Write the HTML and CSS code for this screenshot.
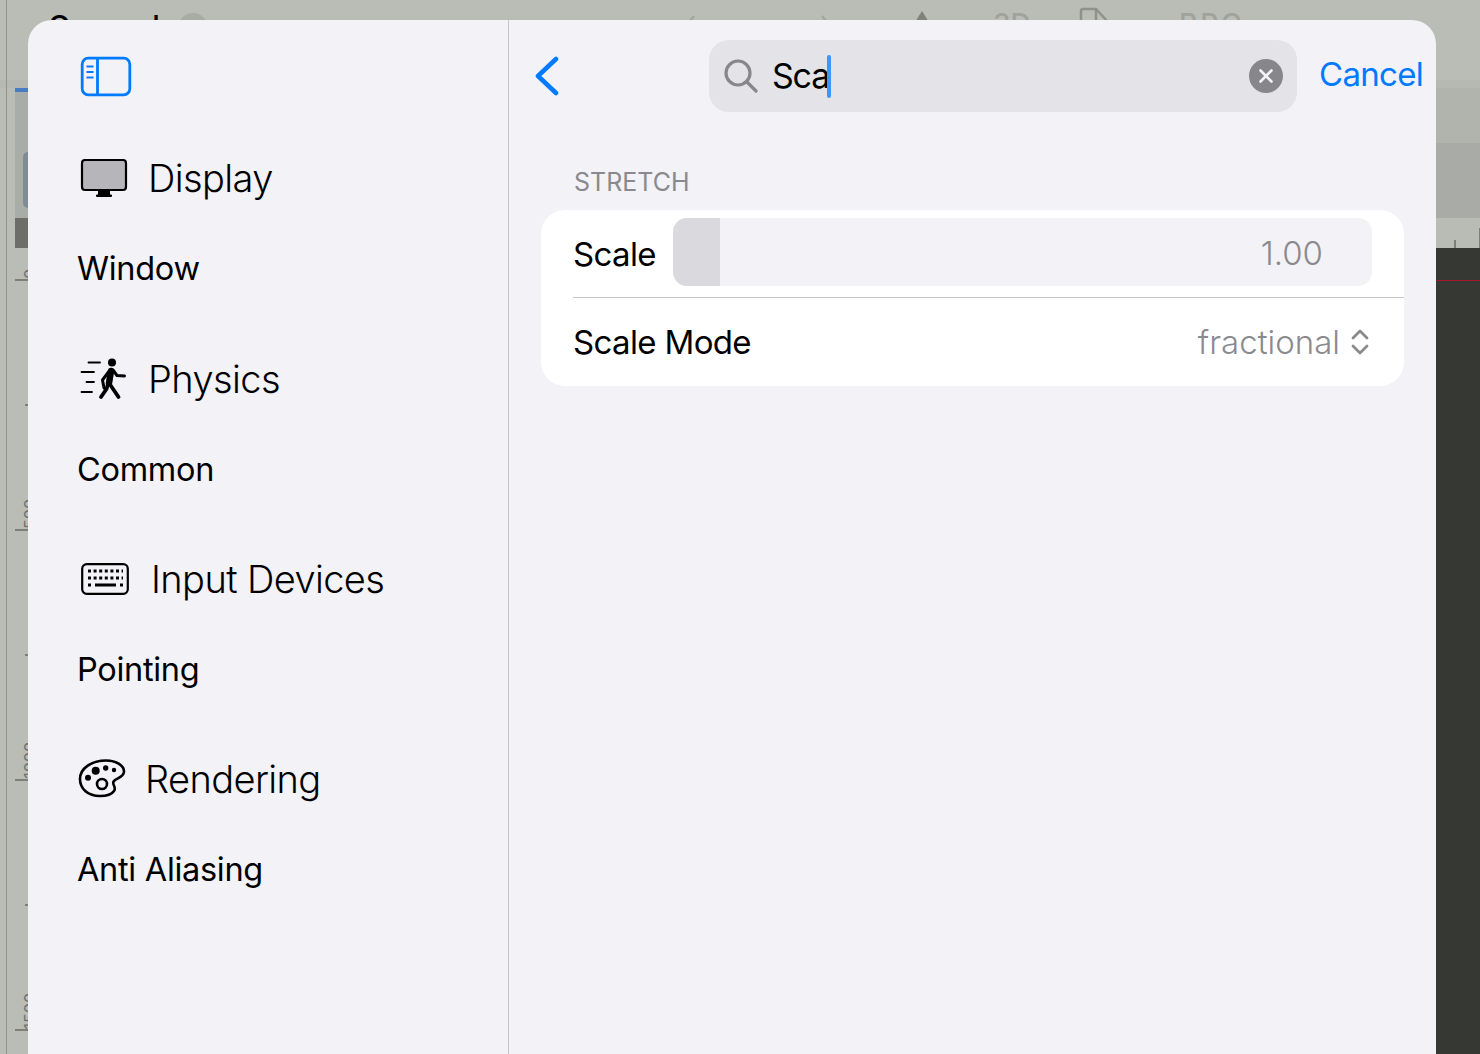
FILE: index.html
```html
<!DOCTYPE html>
<html lang="en">
<head>
    <meta charset="UTF-8">
    <meta name="viewport" content="width=device-width, initial-scale=1.0">
    <title>Settings Search</title>
    <link rel="stylesheet" href="styles.css">
</head>
<body>

<!-- Dimmed editor behind the sheet -->
<div class="editor">
    <div class="topbar">
        <span class="scene-title">General</span>
        <span class="scene-badge"></span>
        <svg class="nav-back" width="20" height="20" viewBox="0 0 20 20"><path d="M12 3 L3 14" /></svg>
        <svg class="nav-forward" width="20" height="20" viewBox="0 0 20 20"><path d="M5 3 L14 14" /></svg>
        <span class="tool-arrow"></span>
        <span class="tool-label tool-3d">3D</span>
        <svg class="tool-doc" width="34" height="24" viewBox="0 0 34 24"><path d="M3 20 V9 Q3 7 5 7 H18 L30 20 M18 7 V20" /></svg>
        <span class="tool-label tool-rpc">RPC</span>
    </div>
    <div class="workspace">
        <div class="left-strip">
            <div class="ruler-panel">
                <div class="panel-accent"></div>
                <div class="panel-body"><div class="panel-thumb"></div></div>
                <div class="panel-dark"></div>
                <div class="ruler">
                    <div class="tick major tick-first"><span>0</span></div>
                    <div class="tick minor"></div>
                    <div class="tick major"><span>500</span></div>
                    <div class="tick minor"></div>
                    <div class="tick major"><span>1000</span></div>
                    <div class="tick minor"></div>
                    <div class="tick major"><span>1500</span></div>
                </div>
            </div>
        </div>
        <div class="right-strip">
            <div class="band band-a"></div>
            <div class="band band-b"></div>
            <div class="band band-c"><i class="mark mark-short"></i><i class="mark mark-tall"></i></div>
            <div class="viewport"><div class="guide"></div></div>
        </div>
    </div>
</div>

<div class="sheet">
    <aside class="sidebar">
        <svg class="sidebar-toggle" width="52" height="41" viewBox="0 0 52 41">
            <rect x="2.200" y="2.200" width="47.600" height="36.600" rx="6" />
            <path d="M17.500 2 V39" />
            <path class="thin" d="M6.500 10.500 H13.500 M6.500 16 H13.500 M6.500 21.500 H13.500" />
        </svg>

        <section class="group">
            <div class="group-head">
                <svg class="icon icon-display" width="48" height="40" viewBox="0 0 48 40">
                    <rect x="2" y="2" width="44" height="30" rx="3" fill="#b5b5ba" stroke="#000" stroke-width="2.200" />
                    <rect x="18" y="32" width="12" height="5" />
                    <rect x="16" y="36.500" width="16" height="2.500" rx="1" />
                </svg>
                <span>Display</span>
            </div>
            <div class="group-item">Window</div>
        </section>

        <section class="group">
            <div class="group-head">
                <svg class="icon icon-physics" width="48" height="44" viewBox="0 0 48 44">
                    <circle cx="32" cy="5.500" r="4" />
                    <path class="limb" d="M31 14 L29 26" />
                    <path class="limb-mid" d="M29 26 L38.500 40" />
                    <path class="limb-mid" d="M28 27 L26.500 32 L21 40" />
                    <path class="limb-thin" d="M30 13 L22.500 23 L24 31" />
                    <path class="limb-thin" d="M33 13 L37 18.500 L44.500 19" />
                    <path class="speed" d="M8.500 5.500 H20 M1.500 15 H14 M6.500 25 H14 M1.500 35 H12" />
                </svg>
                <span>Physics</span>
            </div>
            <div class="group-item">Common</div>
        </section>

        <section class="group">
            <div class="group-head">
                <svg class="icon icon-keyboard" width="48" height="32" viewBox="0 0 48 32">
                    <rect x="1.200" y="1.200" width="45.600" height="29.600" rx="4.500" fill="none" stroke="#000" stroke-width="2.200" />
                    <path class="keys" d="M7 8 H42 M7 15 H42 M7 22 H10 M39 22 H42" />
                    <path class="space" d="M14 22 H35" />
                </svg>
                <span>Input Devices</span>
            </div>
            <div class="group-item">Pointing</div>
        </section>

        <section class="group">
            <div class="group-head">
                <svg class="icon icon-palette" width="48" height="40" viewBox="0 0 48 40">
                    <path class="palette-edge" d="M2 20 C2 9 14 1.500 28 1.500 C39 1.500 46 7 46 12.500 C46 18 39 19 36 22 C33 25 39 28 36 32 C33 36.500 28 37 22 37 C10 37 2 30 2 20 Z" />
                    <circle cx="17.700" cy="11.700" r="4" />
                    <circle cx="27.700" cy="9" r="2.700" />
                    <circle cx="36" cy="11" r="2.200" />
                    <circle cx="10" cy="18.700" r="3" />
                    <circle class="palette-well" cx="24" cy="25" r="5" />
                </svg>
                <span>Rendering</span>
            </div>
            <div class="group-item">Anti Aliasing</div>
        </section>
    </aside>

    <main class="detail">
        <header class="detail-bar">
            <svg class="back" width="26" height="40" viewBox="0 0 26 40"><path d="M22 3 L4 20 L22 37" /></svg>
            <div class="search">
                <svg class="search-icon" width="34" height="34" viewBox="0 0 34 34">
                    <circle cx="14" cy="14" r="12" />
                    <path d="M23 23 L32 32" />
                </svg>
                <span class="search-text">Sca</span><span class="caret"></span>
                <span class="search-clear">
                    <svg width="16" height="16" viewBox="0 0 16 16"><path d="M2.500 2.500 L13.500 13.500 M13.500 2.500 L2.500 13.500" /></svg>
                </span>
            </div>
            <span class="cancel">Cancel</span>
        </header>

        <h2 class="section-title">STRETCH</h2>
        <div class="card">
            <div class="row row-scale">
                <span class="row-label">Scale</span>
                <div class="slider">
                    <div class="slider-fill"></div>
                    <span class="slider-value">1.00</span>
                </div>
            </div>
            <div class="row row-mode">
                <span class="row-label">Scale Mode</span>
                <span class="row-value">fractional</span>
                <svg class="updown" width="20" height="28" viewBox="0 0 20 28"><path d="M3 10 L10 3 L17 10 M3 18 L10 25 L17 18" /></svg>
            </div>
        </div>
    </main>
</div>

</body>
</html>
```
FILE: styles.css
```css
html, body {
    margin: 0;
    height: 100%;
    overflow: hidden;
}
body {
    font-family: Inter, "Liberation Sans", sans-serif;
    color: #000;
    background-color: #babcb6;
}

/* editor behind the sheet */
.editor {
    height: 1054px;
    display: flex;
    flex-direction: column;
}
.topbar {
    height: 88px;
    flex: none;
    display: flex;
    align-items: flex-start;
    padding-top: 13px;
    box-sizing: border-box;
    background:
        linear-gradient(90deg, transparent 6px, #92948e 6px, #92948e 7.500px, transparent 7.500px),
        linear-gradient(#babcb6 80px, #b6b8b2 80px);
}
.scene-title {
    margin-left: 48px;
    margin-top: -5px;
    width: 130px;
    font-size: 30px;
    line-height: 36px;
    font-weight: 500;
}
.scene-badge {
    width: 30px;
    height: 30px;
    border-radius: 50%;
    background-color: #a9aba5;
}
.topbar svg {
    fill: none;
    stroke: #a4a6a0;
    stroke-width: 2.500;
}
.nav-back {
    margin-left: 474px;
}
.nav-forward {
    margin-left: 115px;
}
.tool-arrow {
    margin-left: 75px;
    margin-top: -2px;
    width: 0;
    height: 0;
    border-left: 10px solid transparent;
    border-right: 10px solid transparent;
    border-bottom: 16px solid #7f817b;
}
.tool-label {
    margin-top: -4px;
    font-size: 28px;
    line-height: 30px;
    font-weight: 500;
    color: #a0a29c;
}
.tool-3d {
    margin-left: 61px;
    width: 60px;
}
.topbar .tool-doc {
    margin-left: 25px;
    margin-top: -11px;
    stroke: #8f918b;
}
.tool-rpc {
    margin-left: 67px;
    letter-spacing: 3px;
}

.workspace {
    flex: 1;
    display: flex;
    justify-content: space-between;
}
.left-strip {
    width: 28px;
    padding-left: 6px;
    box-sizing: border-box;
}
.ruler-panel {
    height: 100%;
    border-left: 1.500px solid #92948e;
    padding-left: 8px;
    overflow: hidden;
}
.panel-accent {
    height: 4px;
    background-color: #4a7cc4;
}
.panel-body {
    height: 126px;
    padding-top: 60px;
    box-sizing: border-box;
    background-color: #a9ada8;
}
.panel-thumb {
    height: 56px;
    margin-left: 8px;
    border-radius: 6px 0 0 6px;
    background-color: #7f8c94;
}
.panel-dark {
    height: 30px;
    background-color: #6d6e67;
}
.ruler {
    height: 806px;
    padding-top: 8px;
    box-sizing: border-box;
}
.tick {
    height: 125px;
    position: relative;
    box-sizing: border-box;
}
.tick-first {
    height: 25px;
}
.tick.major {
    border-bottom: 2px solid #7d7f79;
}
.tick.minor {
    display: flex;
    align-items: flex-end;
    justify-content: flex-end;
}
.tick.minor::after {
    content: "";
    width: 3px;
    height: 2px;
    background-color: #7d7f79;
}
.tick span {
    position: absolute;
    left: 7px;
    bottom: 0;
    writing-mode: vertical-rl;
    transform: rotate(180deg);
    font-size: 16px;
    line-height: 17px;
    color: #6f716b;
}

.right-strip {
    width: 44px;
    display: flex;
    flex-direction: column;
}
.band-a {
    height: 55px;
    background-color: #b1b3ad;
}
.band-b {
    height: 75px;
    background-color: #a8aba6;
}
.band-c {
    height: 30px;
    display: flex;
    align-items: flex-end;
    background-color: #b9bbb5;
}
.mark {
    width: 1.500px;
    background-color: #7d7f79;
}
.mark-short {
    margin-left: 18px;
    height: 8px;
}
.mark-tall {
    margin-left: 23px;
    height: 20px;
}
.viewport {
    flex: 1;
    padding-top: 32px;
    background-color: #363833;
}
.guide {
    height: 1px;
    background-color: #a3162c;
}

/* sheet */
.sheet {
    position: absolute;
    left: 28px;
    top: 20px;
    width: 1408px;
    height: 1060px;
    display: flex;
    border-radius: 24px 24px 0 0;
    background-color: #f2f2f7;
    overflow: hidden;
}
.sidebar {
    width: 481px;
    flex: none;
    box-sizing: border-box;
    padding: 36px 0 0 48px;
    border-right: 1px solid #c6c6c8;
}
.sidebar-toggle {
    display: block;
    margin-left: 4px;
    margin-bottom: 36px;
    fill: none;
    stroke: #007aff;
    stroke-width: 2.800;
}
.sidebar-toggle .thin {
    stroke-width: 2;
}
.group {
    margin-bottom: 20px;
}
.group:first-of-type {
    margin-bottom: 21px;
}
.group-head {
    height: 90px;
    display: flex;
    align-items: center;
    font-size: 38px;
    font-weight: 300;
    letter-spacing: -0.600px;
}
.group-item {
    height: 90px;
    display: flex;
    align-items: center;
    padding-left: 1px;
    font-size: 32.500px;
    letter-spacing: -0.300px;
}
.icon {
    flex: none;
}
.icon-display {
    margin-left: 4px;
    margin-right: 20px;
}
.icon-physics {
    margin-left: 4px;
    margin-right: 20px;
}
.icon-physics .limb {
    fill: none;
    stroke: #000;
    stroke-width: 6.500;
    stroke-linecap: round;
}
.icon-physics .limb-mid {
    fill: none;
    stroke: #000;
    stroke-width: 3.800;
    stroke-linecap: round;
    stroke-linejoin: round;
}
.icon-physics .limb-thin {
    fill: none;
    stroke: #000;
    stroke-width: 3;
    stroke-linecap: round;
    stroke-linejoin: round;
}
.icon-physics .speed {
    fill: none;
    stroke: #000;
    stroke-width: 1.800;
    stroke-linecap: round;
}
.icon-keyboard {
    margin-left: 5px;
    margin-right: 22px;
}
.keys {
    fill: none;
    stroke: #000;
    stroke-width: 3;
    stroke-dasharray: 3 2.600;
}
.space {
    fill: none;
    stroke: #000;
    stroke-width: 3;
}
.icon-palette {
    margin-left: 2px;
    margin-right: 19px;
}
.palette-edge, .palette-well {
    fill: none;
    stroke: #000;
    stroke-width: 2.600;
}

.detail {
    flex: 1;
    min-width: 0;
}
.detail-bar {
    height: 72px;
    margin-top: 20px;
    display: flex;
    align-items: center;
}
.back {
    margin-left: 25px;
    flex: none;
    fill: none;
    stroke: #007aff;
    stroke-width: 4.500;
    stroke-linecap: round;
    stroke-linejoin: round;
}
.search {
    margin-left: 149px;
    width: 588px;
    height: 72px;
    flex: none;
    box-sizing: border-box;
    padding: 0 14px 0 16px;
    display: flex;
    align-items: center;
    border-radius: 20px;
    background-color: #e3e3e8;
}
.search-icon {
    flex: none;
    margin-left: -1px;
    fill: none;
    stroke: #86868b;
    stroke-width: 3.200;
    stroke-linecap: round;
}
.search-text {
    margin-left: 14px;
    padding-bottom: 2px;
    font-size: 34px;
    letter-spacing: -1.200px;
}
.caret {
    width: 4px;
    height: 43px;
    margin-left: -2px;
    border-radius: 2px;
    background-color: #3c96ff;
}
.search-clear {
    margin-left: auto;
    width: 34px;
    height: 34px;
    flex: none;
    display: flex;
    align-items: center;
    justify-content: center;
    border-radius: 50%;
    background-color: #86868b;
}
.search-clear svg {
    fill: none;
    stroke: #f2f2f7;
    stroke-width: 2.600;
    stroke-linecap: round;
}
.cancel {
    margin-left: 22px;
    padding-bottom: 4px;
    font-size: 33px;
    letter-spacing: -0.700px;
    color: #007aff;
    white-space: nowrap;
}
.section-title {
    margin: 53px 0 0 65px;
    height: 34px;
    line-height: 34px;
    font-size: 25px;
    font-weight: 400;
    color: #8a8a8e;
}
.card {
    margin: 11px 32px 0 32px;
    height: 176px;
    border-radius: 24px;
    background-color: #fff;
    overflow: hidden;
}
.row {
    height: 88px;
    margin-left: 32px;
    display: flex;
    align-items: center;
    box-sizing: border-box;
}
.row-scale {
    border-bottom: 1px solid #c6c6c8;
    padding: 8px 32px 11px 0;
    align-items: flex-start;
}
.row-scale .row-label {
    line-height: 72px;
}
.row-label {
    font-size: 33px;
    letter-spacing: -0.650px;
    flex: none;
}
.slider {
    margin-left: auto;
    width: 699px;
    height: 68px;
    display: flex;
    align-items: center;
    justify-content: space-between;
    border-radius: 14px;
    background-color: #f2f2f7;
    overflow: hidden;
}
.slider-fill {
    width: 47px;
    height: 100%;
    background-color: #d9d9de;
}
.slider-value {
    margin-right: 49px;
    margin-top: 1px;
    font-size: 33px;
    font-weight: 300;
    color: #8a8a8e;
}
.row-mode {
    padding-right: 34px;
}
.row-value {
    margin-left: auto;
    font-size: 33px;
    font-weight: 300;
    color: #8a8a8e;
}
.updown {
    margin-left: 10px;
    flex: none;
    fill: none;
    stroke: #8a8a8e;
    stroke-width: 2.800;
    stroke-linecap: round;
    stroke-linejoin: round;
}
```
